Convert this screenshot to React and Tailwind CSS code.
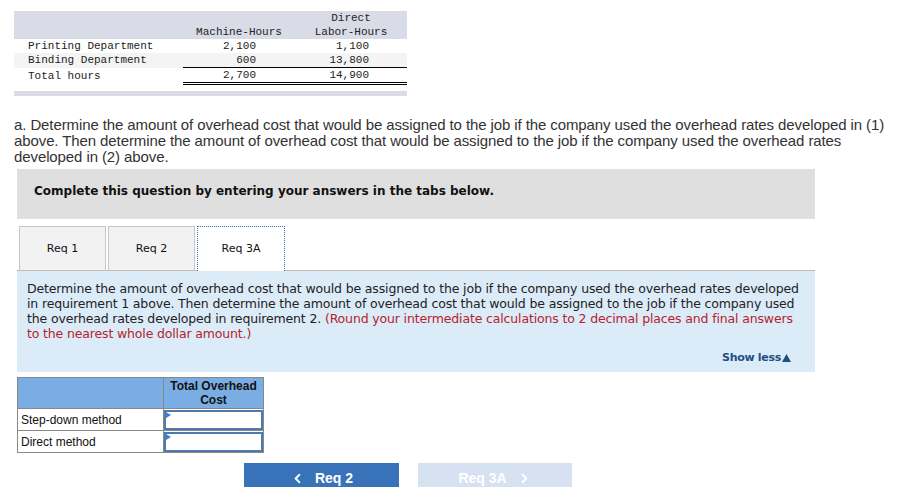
import { ChevronLeft, ChevronRight } from 'lucide-react';

const mono = { fontFamily: '"Liberation Mono", "DejaVu Sans Mono", monospace' };

const hours = [
  { dept: 'Printing Department', mh: '2,100', dl: '1,100', shade: false },
  { dept: 'Binding Department', mh: '600', dl: '13,800', shade: true },
];

const App = () => {
  return (
    <div className="w-[898px] h-[487px] overflow-hidden bg-white pl-[14px] pt-[11px] font-['Liberation_Sans',Arial,sans-serif]">
      {/* Hours table */}
      <table className="w-[393px] border-collapse text-[11px] leading-[14px] text-[#222]" style={mono}>
        <thead>
          <tr className="bg-[#d9dce7] h-[28px]">
            <th className="w-[169px]"></th>
            <th className="w-[112px] font-normal align-bottom text-center">Machine-Hours</th>
            <th className="w-[112px] font-normal align-bottom text-center">Direct<br />Labor-Hours</th>
          </tr>
        </thead>
        <tbody>
          {hours.map((r) => (
            <tr key={r.dept} className={`h-[14px] ${r.shade ? 'bg-[#f4f4f4]' : 'bg-white'}`}>
              <td className="pl-[14px]">{r.dept}</td>
              <td className="text-right pr-[39px]">{r.mh}</td>
              <td className="text-right pr-[38px]">{r.dl}</td>
            </tr>
          ))}
          <tr className="h-[15px]">
            <td className="pl-[14px]">Total hours</td>
            <td className="text-right pr-[39px] border-t border-b-[3px] border-double border-black">2,700</td>
            <td className="text-right pr-[38px] border-t border-b-[3px] border-double border-black">14,900</td>
          </tr>
        </tbody>
      </table>
      <div className="w-[393px] h-[5px] bg-[#d9dce7] mt-[6px]"></div>

      {/* Question text */}
      <p className="mt-[21px] w-[876px] text-[15px] leading-[16px] text-[#333] tracking-[-0.1px]">
        a. Determine the amount of overhead cost that would be assigned to the job if the company used the overhead rates developed in (1) above. Then determine the amount of overhead cost that would be assigned to the job if the company used the overhead rates developed in (2) above.
      </p>

      <div className="ml-[3px] w-[798px]">
        <div className="mt-[4px] h-[50px] bg-[#dfdfdf] flex items-center pl-[17px] pb-[6px]">
          <span className="text-[12px] font-bold text-[#111] font-['DejaVu_Sans',Verdana,sans-serif]">
            Complete this question by entering your answers in the tabs below.
          </span>
        </div>

        {/* Tabs */}
        <div className="mt-[7px] flex items-end border-b border-[#bdbdbd] pl-[2px] gap-[2px] h-[45px] font-['DejaVu_Sans',Verdana,sans-serif] text-[11px] text-[#111]">
          <div className="w-[87px] h-[44px] bg-[#f2f2f2] border border-b-0 border-[#c6c6c6] flex items-center justify-center pt-[2px]">Req 1</div>
          <div className="w-[87px] h-[44px] bg-[#f2f2f2] border border-b-0 border-[#c6c6c6] flex items-center justify-center pt-[2px]">Req 2</div>
          <div className="w-[88px] h-[45px] bg-white border border-dotted border-b-0 border-[#3c6fb0] flex items-center justify-center -mb-px">Req 3A</div>
        </div>

        {/* Instructions panel */}
        <div className="bg-[#dcebf8] h-[101px] pl-[10px] pr-[10px] pt-[10px] relative">
          <p className="text-[12.5px] leading-[15px] text-[#222] tracking-[-0.15px] font-['DejaVu_Sans',Verdana,sans-serif]">
            Determine the amount of overhead cost that would be assigned to the job if the company used the overhead rates developed in requirement 1 above. Then determine the amount of overhead cost that would be assigned to the job if the company used the overhead rates developed in requirement 2.{' '}
            <span className="text-[#b5232b]">(Round your intermediate calculations to 2 decimal places and final answers to the nearest whole dollar amount.)</span>
          </p>
          <div className="absolute right-[24px] top-[79px] flex items-center text-[11px] font-bold text-[#1f4f82] font-['DejaVu_Sans',Verdana,sans-serif] tracking-[-0.3px]">
            Show less
            <svg className="ml-[1px]" width="9" height="8" viewBox="0 0 9 8">
              <polygon points="4.5,0 9,8 0,8" fill="#1f4f82" />
            </svg>
          </div>
        </div>

        {/* Answer table */}
        <table className="mt-[5px] border-collapse text-[12px] text-[#111]">
          <thead>
            <tr className="bg-[#7aade3] h-[31px]">
              <th className="w-[146px] border border-[#888]"></th>
              <th className="w-[100px] border border-[#888] font-bold leading-[14px] text-center align-top pt-[1px]">Total Overhead<br />Cost</th>
            </tr>
          </thead>
          <tbody>
            {['Step-down method', 'Direct method'].map((m) => (
              <tr key={m} className="h-[22px]">
                <td className="border border-[#888] pl-[3px]">{m}</td>
                <td className="border border-[#888] p-0">
                  <div className="relative h-[20px] border-2 border-[#4f79b0] bg-white">
                    <svg className="absolute left-0 top-0" width="5" height="6" viewBox="0 0 5 6">
                      <polygon points="0,0 5,3 0,6" fill="#3f7fcf" />
                    </svg>
                  </div>
                </td>
              </tr>
            ))}
          </tbody>
        </table>

        {/* Nav buttons */}
        <div className="mt-[10px] ml-[227px] flex gap-[19px]">
          <div className="w-[155px] h-[30px] bg-[#3873b9] flex items-center justify-center gap-[10px] text-white text-[14px] font-bold">
            <ChevronLeft size={15} strokeWidth={3} />
            <span>Req 2</span>
          </div>
          <div className="w-[154px] h-[30px] bg-[#d6e2f1] flex items-center justify-center gap-[10px] text-white text-[14px] font-bold">
            <span>Req 3A</span>
            <ChevronRight size={15} strokeWidth={3} />
          </div>
        </div>
      </div>
    </div>
  );
};

export default App;
